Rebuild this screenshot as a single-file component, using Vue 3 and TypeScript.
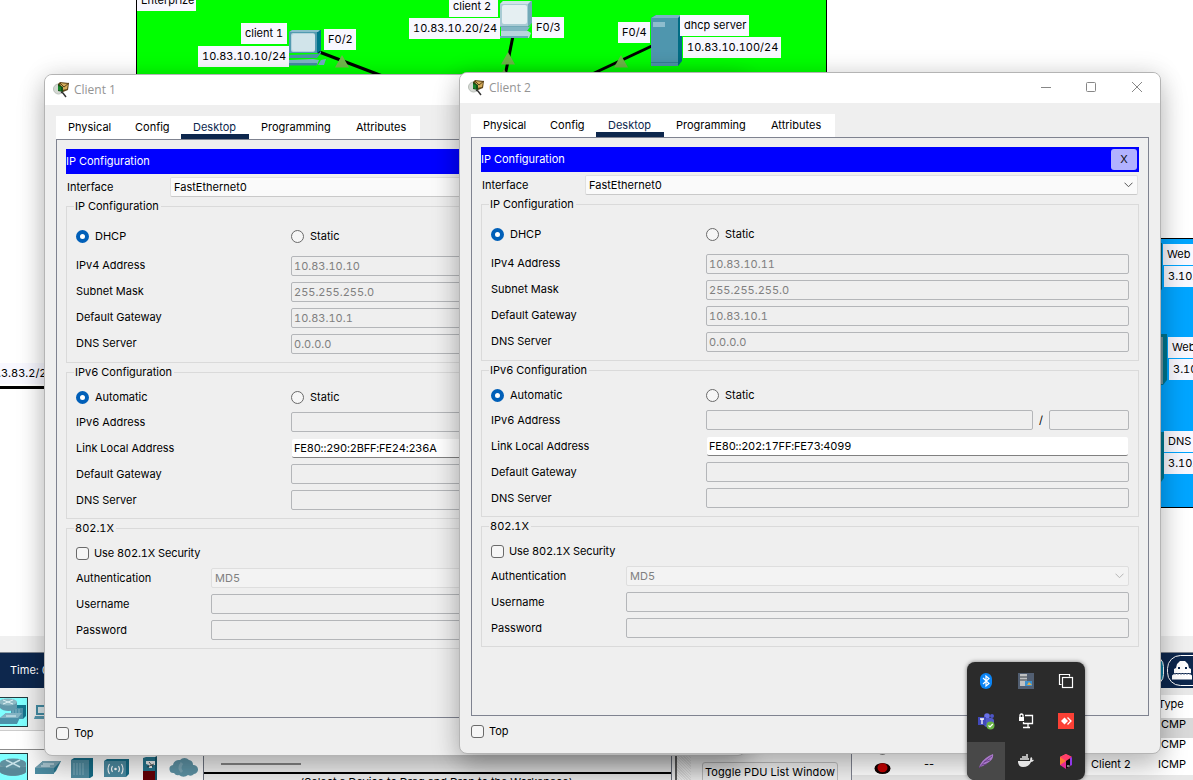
<script setup lang="ts">
interface FieldRow {
  label: string
  value?: string
  kind?: 'plain' | 'split' | 'editable' | 'select'
}

interface Group {
  id: string
  title: string
  radio?: string
  check?: string
  rows: FieldRow[]
}

interface ClientWindow {
  id: string
  title: string
  groups: Group[]
}

const tabs = ['Physical', 'Config', 'Desktop', 'Programming', 'Attributes']

function clientWindow(id: string, title: string, address: string, linkLocal: string): ClientWindow {
  return {
    id,
    title,
    groups: [
      {
        id: 'ipv4',
        title: 'IP Configuration',
        radio: 'DHCP',
        rows: [
          { label: 'IPv4 Address', value: address },
          { label: 'Subnet Mask', value: '255.255.255.0' },
          { label: 'Default Gateway', value: '10.83.10.1' },
          { label: 'DNS Server', value: '0.0.0.0' },
        ],
      },
      {
        id: 'ipv6',
        title: 'IPv6 Configuration',
        radio: 'Automatic',
        rows: [
          { label: 'IPv6 Address', kind: 'split' },
          { label: 'Link Local Address', value: linkLocal, kind: 'editable' },
          { label: 'Default Gateway' },
          { label: 'DNS Server' },
        ],
      },
      {
        id: 'dot1x',
        title: '802.1X',
        check: 'Use 802.1X Security',
        rows: [
          { label: 'Authentication', value: 'MD5', kind: 'select' },
          { label: 'Username' },
          { label: 'Password' },
        ],
      },
    ],
  }
}

const windows: ClientWindow[] = [
  clientWindow('one', 'Client 1', '10.83.10.10', 'FE80::290:2BFF:FE24:236A'),
  clientWindow('two', 'Client 2', '10.83.10.11', 'FE80::202:17FF:FE73:4099'),
]

interface Tag {
  text: string
  x: number
  y: number
  w: number
}

const tags: Tag[] = [
  { text: 'Enterprize', x: 137, y: -10, w: 59 },
  { text: 'client 1', x: 241, y: 23, w: 46 },
  { text: '10.83.10.10/24', x: 198, y: 46, w: 91 },
  { text: 'F0/2', x: 324, y: 29, w: 32 },
  { text: 'client 2', x: 449, y: -4, w: 49 },
  { text: '10.83.10.20/24', x: 409, y: 18, w: 91 },
  { text: 'F0/3', x: 532, y: 17, w: 32 },
  { text: 'F0/4', x: 618, y: 22, w: 32 },
  { text: 'dhcp server', x: 680, y: 15, w: 69 },
  { text: '10.83.10.100/24', x: 683, y: 37, w: 98 },
  { text: '.3.83.2/24', x: -6, y: 363, w: 62 },
  { text: 'Web', x: 1163, y: 244, w: 60 },
  { text: '3.10.', x: 1164, y: 266, w: 60 },
  { text: 'Web', x: 1168, y: 337, w: 60 },
  { text: '3.10.', x: 1169, y: 359, w: 60 },
  { text: 'DNS', x: 1164, y: 431, w: 60 },
  { text: '3.10.', x: 1164, y: 453, w: 60 },
]
</script>

<template>
  <div class="desktop">
    <svg class="canvas" width="1193" height="640" viewBox="0 0 1193 640">
      <rect x="136.5" y="-5" width="690" height="300" fill="#00ff00" stroke="#000" />
      <g stroke="#000" stroke-width="3">
        <path d="M318 51.500L385 77" />
        <path d="M513 36L505 76" />
        <path d="M654 45L590 75" />
      </g>
      <g fill="#70b84c">
        <path d="M342 55l7 12.500h-14z" />
        <path d="M508 52l7 12.500h-14z" />
        <path d="M621 55l7 12.500h-14z" />
        <path d="M504 69l7 12.500h-14z" />
      </g>
      <g>
        <path d="M289 32l3-2h29v20l-3 3h-29z" fill="#00738c" />
        <path d="M289 32l3-2h28l-2 2z" fill="#8bbccb" />
        <rect x="289" y="32" width="28" height="21" fill="#529bb0" />
        <rect x="291" y="33" width="24" height="19" rx="2" fill="#b3d2dc" />
        <rect x="292" y="34" width="23" height="17" rx="2" fill="#d1e4ea" />
        <path d="M290 55l28-1 3-3v2l-4 5h-28z" fill="#4c93aa" />
        <path d="M289 60l24-1 6 1-2 5h-28z" fill="#7fb3c6" />
        <path d="M289 63h28v2.500h-28z" fill="#438ba3" />
        <path d="M321 60l5-1-2 6h-6z" fill="#72acc1" />
      </g>
      <g>
        <path d="M500 4l3-3h29v22l-4 4h-28z" fill="#72a9b7" />
        <path d="M500 4l3-3h28l-3 3z" fill="#cfe3e8" />
        <rect x="500" y="4" width="28" height="22" fill="#a8cbd4" />
        <rect x="502" y="5" width="25" height="19" rx="2" fill="#e5eff2" />
        <path d="M501 27h28l3-3-5 7h-26z" fill="#83b5c3" />
        <path d="M501 31h27l3 2-2 5h-28z" fill="#b7d5dd" />
        <path d="M500 36h28v2h-28z" fill="#6ba8ba" />
      </g>
      <g>
        <path d="M651 18l5-3h26v46l-4 5h-27z" fill="#006c84" />
        <path d="M651 18l5-3h25l-3 3z" fill="#7ab4c5" />
        <rect x="651" y="18" width="27" height="48" fill="#4f96ae" />
        <rect x="653" y="22" width="12" height="5" fill="#8ebdce" />
        <path d="M651 62.500h27" stroke="#397f96" />
      </g>
      <rect x="0" y="386" width="60" height="3" fill="#000" />
      <rect x="1150" y="238.500" width="60" height="269" fill="#00a5ff" stroke="#000" />
      <path d="M1155 243h7v46l-3 4h-4z" fill="#00667c" />
      <path d="M1155 334h12v46l-4 5h-8z" fill="#00758d" />
      <path d="M1155 337h8v47h-8z" fill="#7295a1" />
      <path d="M1155 432h9v46l-3 4h-6z" fill="#00758d" />
    </svg>
    <span
      v-for="(tag, i) in tags"
      :key="i"
      class="tag"
      :style="{ left: tag.x + 'px', top: tag.y + 'px', width: tag.w + 'px' }"
    >{{ tag.text }}</span>

    <footer class="dock">
      <div class="clock-bar">
        <span>Time: 00:12:34</span>
        <svg width="36" height="35" viewBox="1157 653 36 35">
          <rect x="1130" y="655.500" width="33.500" height="30" rx="11" fill="#08799e" stroke="#fff" />
          <rect x="1167.500" y="655.500" width="50" height="30" rx="13" fill="#0d274d" stroke="#fff" />
          <path d="M1174 673v-4l2-1 1-4 3-3h5l3 3 1 4 2 1v4z" fill="#fff" />
          <path d="M1172 675.500l2-1.500h16l2 1.500v4h-20z" fill="#fff" />
          <path d="M1178 667h2v2h-2zM1185 667h2v2h-2z" fill="#0d274d" />
          <path d="M1174 674h17" stroke="#72809a" stroke-dasharray="2 1" />
        </svg>
      </div>
      <div class="dock-body">
        <section class="devices">
          <div class="category-row">
            <svg width="60" height="38" viewBox="0 692 60 38">
              <rect x="-1" y="697.500" width="28.500" height="29" fill="#7fffff" stroke="#243c40" />
              <path d="M11 708l4-3h11v11l-3 3H11z" fill="#14758d" />
              <path d="M11 708h12v11H11z" fill="#4c91a9" />
              <path d="M13 709v9m3-9v9m3-9v9" stroke="#81b3c3" />
              <path d="M0 702v6c3 4 14 4 17 0v-6z" fill="#6398aa" />
              <ellipse cx="8" cy="702" rx="9" ry="3.500" fill="#8eb8c3" />
              <path d="M3 700l10 4m-10 0l10-4" stroke="#e0f2f5" />
              <path d="M0 718l6-5h16l-5 11H0z" fill="#4c91a9" />
              <path d="M0 718l6-5h16l-4 5z" fill="#82b3c3" />
              <path d="M6 716h10" stroke="#e1f5f8" />
              <path d="M36 705h14v10H36z" fill="#438ca4" />
              <path d="M38 707h12v6H38z" fill="#dbe8ec" />
              <path d="M35 716h16v3H34z" fill="#5799af" />
            </svg>
          </div>
          <div class="search-row"></div>
          <div class="device-row">
            <svg width="203" height="30" viewBox="0 750 203 30">
              <rect x="-1" y="753.500" width="28.500" height="30" fill="#7fffff" stroke="#243c40" />
              <path d="M0 763v9c4 5 22 5 26 0v-9z" fill="#7396a2" />
              <path d="M0 767v5c4 5 22 5 26 0v-5z" fill="#588897" />
              <ellipse cx="13" cy="763.500" rx="13" ry="5" fill="#60909f" />
              <path d="M6 760l14 7m-14 0l14-7" stroke="#c6e0e6" stroke-width="1.500" />
              <path d="M35 768l8-7h18l-5 10-3 3H35z" fill="#27748c" />
              <path d="M35 768l8-7h18l-7 7z" fill="#75a0b0" />
              <path d="M35 768h19v6H35z" fill="#4c8ca2" />
              <path d="M43 764h11m-13 2h9" stroke="#dceaf0" />
              <path d="M71 760l3-2h19v18l-3 2H71z" fill="#166d87" />
              <path d="M71 760h18v18H71z" fill="#508ca1" />
              <path d="M74 763v12m3-12v12m3-12v12m3-12v12" stroke="#97bdca" stroke-width=".7" />
              <path d="M104 761l3-2h22v15l-3 3h-22z" fill="#166d87" />
              <path d="M104 761h22v16h-22z" fill="#4d8ca2" />
              <circle cx="115.500" cy="769" r="1.300" fill="#fff" />
              <path d="M112.500 766q-2 3 0 6m6-6q2 3 0 6m-9-8q-3 5 0 10m12-10q3 5 0 10" fill="none" stroke="#fff" stroke-width="1.100" />
              <path d="M143 758l3-1h11v14h-14z" fill="#27768e" />
              <path d="M143 771h14v9h-14z" fill="#650007" />
              <path d="M155 757l2-1v24h-2z" fill="#16566b" />
              <path d="M146 761h9v4h-3v3h-3v-3l-3-1z" fill="#eee" />
              <path d="M147 767l7-3m-5-2l4 5" stroke="#333" stroke-width=".8" />
              <path d="M174 773a4 4 0 0 1-1-8 6 6 0 0 1 7-5 6 6 0 0 1 9 0 5 5 0 0 1 4 5 4.500 4.500 0 0 1 1 9 5 5 0 0 1-6 1 7 7 0 0 1-9 0q-3 1-5-2z" fill="#5e93a5" />
              <path d="M182 763q-4 5 0 9" fill="none" stroke="#7ba6b5" stroke-width="3" />
            </svg>
          </div>
        </section>
        <section class="hint">
          <div class="track"><i></i></div>
          <p>(Select a Device to Drag and Drop to the Workspace)</p>
        </section>
        <div class="grip"></div>
        <section class="toggle"><button>Toggle PDU List Window</button></section>
        <section class="events">
          <div class="event head"><span class="type">Type</span></div>
          <div class="event picked"><span class="type">ICMP</span></div>
          <div class="event"><span class="type">ICMP</span></div>
          <div class="event last">
            <svg width="17" height="28" viewBox="0 0 17 28">
              <ellipse cx="8.500" cy="-1" rx="6" ry="4.500" fill="#111" />
              <ellipse cx="8.500" cy="17.500" rx="8" ry="5.500" fill="#110000" />
              <ellipse cx="8.500" cy="16.800" rx="5" ry="4.500" fill="#c60000" />
            </svg>
            <span class="dashes">--</span><span class="source">Client 2</span><span class="type">ICMP</span>
          </div>
        </section>
      </div>
    </footer>

    <article v-for="win in windows" :key="win.id" class="window" :class="win.id">
      <header class="titlebar">
        <svg class="app-icon" width="17" height="17" viewBox="0 0 17 17">
          <ellipse cx="5.500" cy="8" rx="5" ry="5" fill="#d5d9d4" stroke="#b9beb8" />
          <path d="M5 3l2-2 9 1-1 7-5 2-5-3z" fill="#604719" />
          <path d="M7 2l8 1-1 5-5 1z" fill="#d6ad5b" />
          <path d="M7 2l4 4 5-4" fill="none" stroke="#5b4219" />
          <path d="M5 3l5 3v5l-5-1z" fill="#174f17" />
          <path d="M5 5l3 1v4l-3-1z" fill="#16852a" />
          <path d="M8 11l2 1 3 4" stroke="#333" stroke-width="1.500" fill="none" />
        </svg>
        <span class="caption">{{ win.title }}</span>
        <svg class="controls" width="110" height="16" viewBox="0 0 110 16" fill="none" stroke="#878787">
          <path d="M4 8.500h10" />
          <rect x="49.500" y="3.500" width="9" height="9" rx="1" />
          <path d="M95 3l10 10m0-10L95 13" />
        </svg>
      </header>

      <nav class="tabs">
        <span v-for="tab in tabs" :key="tab" class="tab" :class="{ active: tab === 'Desktop' }">{{ tab }}</span>
      </nav>

      <main class="pane">
        <div class="banner"><span>IP Configuration</span><button>X</button></div>
        <div class="interface">
          <span>Interface</span>
          <div class="box combo">
            FastEthernet0
            <svg width="9" height="6" viewBox="0 0 9 6"><path d="M.5.7l4 4 4-4" fill="none" stroke="#555" /></svg>
          </div>
        </div>

        <section v-for="group in win.groups" :key="group.id" class="group" :class="group.id">
          <h3>{{ group.title }}</h3>
          <div class="options">
            <template v-if="group.radio">
              <span class="option"><i class="radio on"></i>{{ group.radio }}</span>
              <span class="option"><i class="radio"></i>Static</span>
            </template>
            <span v-else class="option check-option"><i class="check"></i>{{ group.check }}</span>
          </div>
          <div v-for="row in group.rows" :key="row.label" class="row">
            <span class="name">{{ row.label }}</span>
            <template v-if="row.kind === 'split'">
              <div class="box"></div>
              <span class="slash">/</span>
              <div class="box prefix"></div>
            </template>
            <div v-else-if="row.kind === 'select'" class="box combo disabled">
              {{ row.value }}
              <svg width="9" height="6" viewBox="0 0 9 6"><path d="M.5.7l4 4 4-4" fill="none" stroke="#b5b5b5" /></svg>
            </div>
            <div v-else class="box" :class="row.kind">{{ row.value }}</div>
          </div>
        </section>
      </main>
      <footer class="top-option"><i class="check"></i>Top</footer>
    </article>

    <aside class="tray">
      <div class="cell">
        <svg viewBox="0 0 18 18">
          <rect x="3" y="1" width="12" height="16" rx="6" fill="#0a84f5" />
          <path d="M6 6l6 5.500-3 2.500V4l3 2.500L6 12" fill="none" stroke="#fff" stroke-width="1.200" />
        </svg>
      </div>
      <div class="cell">
        <svg viewBox="0 0 18 18">
          <rect x="1" y="1" width="16" height="16" fill="#525f72" />
          <rect x="3" y="2" width="7" height="12" fill="#bfc1c2" />
          <path d="M3 5h7M3 8h7" stroke="#3d4248" />
          <rect x="8" y="9" width="7" height="5" fill="#3b91cf" />
          <path d="M10 13l2-3 3 3z" fill="#e4ad4b" />
        </svg>
      </div>
      <div class="cell">
        <svg viewBox="0 0 18 18" fill="none" stroke="#fff" stroke-width="1.200">
          <path d="M4.500 12.500h-2v-10h10v2" />
          <rect x="5.500" y="5.500" width="10" height="10" />
        </svg>
      </div>
      <div class="cell">
        <svg viewBox="0 0 18 18">
          <circle cx="10" cy="4" r="2.800" fill="#6870e8" />
          <circle cx="15" cy="4" r="2" fill="#4d55c8" />
          <rect x="7" y="6" width="10" height="9" rx="3" fill="#5059c9" />
          <rect x="1" y="5" width="8" height="8" fill="#4149ba" />
          <path d="M3 7h4M5 7v5" stroke="#fff" stroke-width="1.300" />
          <circle cx="13.500" cy="13.500" r="4" fill="#69b344" />
          <path d="M11.500 13.500l1.500 1.500 2.800-3" fill="none" stroke="#fff" stroke-width="1.200" />
        </svg>
      </div>
      <div class="cell">
        <svg viewBox="0 0 18 18" fill="none" stroke="#fff" stroke-width="1.300">
          <path d="M8 3.500h7.500v8h-9V10" />
          <path d="M11 12v3M6 15.500h7" />
          <rect x="2" y="5" width="5" height="4" fill="#fff" stroke="none" />
          <path d="M3 5V3q1.500-2 3 0v2" />
        </svg>
      </div>
      <div class="cell">
        <svg viewBox="0 0 18 18">
          <rect x="1" y="1" width="16" height="16" fill="#fb4035" />
          <path d="M7.500 5.500L11 9l-3.500 3.500L4 9z" fill="#fff" />
          <path d="M10.500 5.500L14 9l-3.500 3.500" fill="none" stroke="#fff" stroke-width="1.300" />
        </svg>
      </div>
      <div class="cell lit">
        <svg viewBox="0 0 18 18">
          <path d="M2 16Q4 7 16 2q1 5-4 8l-6 4q-2 0-4 2z" fill="#a979c9" />
          <path d="M2 16Q7 9 15 4M5 13l5-1m-3-2l6-2" fill="none" stroke="#633681" stroke-width=".8" />
        </svg>
      </div>
      <div class="cell">
        <svg viewBox="0 0 18 18">
          <path d="M1 9h12q0-3 1-4 2 1 1 3 1-.5 2 0-1 2-3 2-2 5-8 5-5 0-5-6z" fill="#e5e5e5" />
          <path d="M3 7h9M5 5h6M9 3h2" stroke="#e5e5e5" stroke-width="1.500" />
        </svg>
      </div>
      <div class="cell">
        <svg viewBox="0 0 18 18">
          <path d="M9 2l6 3v8l-6 4-6-4V5z" fill="#e52b94" />
          <path d="M3 5l6-3v7l-6 4z" fill="#fc7b32" />
          <path d="M9 2l6 3-6 4-6-4z" fill="#ff3f69" />
          <path d="M9 9l6-4v8l-6 4z" fill="#080808" />
          <path d="M15 5v8l-2 1V6z" fill="#9039e8" />
          <path d="M10 14h2.500" stroke="#fff" />
        </svg>
      </div>
    </aside>
  </div>
</template>

<style>
html,
body {
  overflow: hidden;
}
</style>

<style scoped>
.desktop {
  position: relative;
  width: 1193px;
  height: 780px;
  overflow: hidden;
  background: #fff;
  color: #000;
  font: 11px/14px Inter, "Liberation Sans", sans-serif;
  font-variant-numeric: tabular-nums;
}
.desktop *,
.desktop {
  box-sizing: border-box;
}
svg {
  display: block;
  flex: none;
}
button {
  font: inherit;
  color: inherit;
  padding: 0;
}
.canvas {
  position: absolute;
  inset: 0 auto auto 0;
}
.tag {
  position: absolute;
  height: 21px;
  padding-left: 4px;
  background: #f8f8ff;
  line-height: 20px;
  white-space: nowrap;
}

/* Lower toolbars */
.dock {
  position: absolute;
  inset: 636px 0 0 0;
  display: flex;
  flex-direction: column;
  padding-top: 16px;
  background: #f0f0f0;
}
.clock-bar {
  flex: none;
  display: flex;
  justify-content: space-between;
  align-items: center;
  height: 36px;
  padding-left: 10px;
  border-top: 1px solid #7e8590;
  background: #0d274d;
  color: #fff;
}
.clock-bar span {
  padding-bottom: 2px;
}
.dock-body {
  flex: 1;
  display: flex;
  min-height: 0;
}
.devices {
  width: 203px;
  padding-top: 4px;
}
.category-row {
  height: 38px;
}
.search-row {
  height: 20px;
  border-top: 1px solid #ccc;
  border-bottom: 1px solid #8b8b8b;
  background: #fff;
}
.device-row {
  height: 30px;
  background: #fafafa;
}
.hint {
  width: 469px;
  margin-top: 62px;
  border: 1px solid #6e7480;
  border-width: 0 1px;
  background: #efefef;
}
.track {
  height: 24px;
  padding: 13px 0 0 17px;
  border-bottom: 2px solid #000;
}
.track i {
  display: block;
  width: 80px;
  height: 2px;
  background: #858585;
}
.hint p {
  margin: 1px 0 0;
  padding-right: 2px;
  text-align: center;
  white-space: nowrap;
  letter-spacing: -0.03px;
}
.grip {
  width: 22px;
  margin-left: 3px;
  border-left: 2px solid #606060;
  background: repeating-linear-gradient(45deg, #f0f0f0 0 1px, #e0e0e0 1px 2px) no-repeat 0 0 / 14px 100%;
}
.toggle {
  width: 154px;
  padding: 74px 0 0 5px;
}
.toggle button {
  display: block;
  width: 136px;
  height: 22px;
  padding-bottom: 2px;
  border: 1px solid #bdbdbd;
  border-radius: 3px;
  background: #efefef;
  white-space: nowrap;
  letter-spacing: 0.1px;
}
.events {
  flex: 1;
  padding-top: 7px;
  border-left: 1px solid #7f8390;
  background: #e8e8e8;
}
.event {
  display: flex;
  align-items: center;
  height: 20px;
  padding-bottom: 8px;
  background: #fff;
}
.event.head {
  height: 23px;
  padding-bottom: 5px;
}
.event.picked {
  background: #d9d9d9;
}
.event.last {
  height: 17px;
  padding-bottom: 5px;
}
.event svg {
  margin: 1px 0 0 22px;
}
.event .type {
  width: 35px;
  margin-left: auto;
}
.dashes {
  margin-left: 33px;
  font-variant-numeric: normal;
}
.source {
  margin-left: auto;
  margin-right: 27px;
}
.source + .type {
  margin-left: 0;
}

/* Windows */
.window {
  position: absolute;
  display: flex;
  flex-direction: column;
  width: 702px;
  height: 682px;
  padding: 0 11px;
  border: 1px solid #b4b4b4;
  border-radius: 8px;
  background: #efefef;
  box-shadow: 0 14px 28px rgba(0, 0, 0, 0.22), 0 0 24px rgba(0, 0, 0, 0.12);
}
.window.one {
  left: 44px;
  top: 74px;
}
.window.two {
  left: 459px;
  top: 72px;
}
.titlebar {
  flex: none;
  display: flex;
  align-items: center;
  height: 30px;
  margin: 0 -11px;
  padding: 0 13px 0 8px;
  border-radius: 7px 7px 0 0;
  background: #fff;
  color: #949494;
}
.caption {
  margin-left: 4px;
  font: 12px/16px "Open Sans", sans-serif;
}
.app-icon {
  margin-bottom: 2px;
}
.controls {
  margin: 0 0 2px auto;
}
.tabs {
  flex: none;
  display: flex;
  width: 364px;
  height: 23px;
  margin-top: 11px;
  background: #fff;
}
.tab {
  width: 67px;
  padding-left: 12px;
  line-height: 22px;
}
.tab:nth-child(2) {
  width: 58px;
}
.tab:nth-child(3) {
  width: 68px;
}
.tab:nth-child(4) {
  width: 95px;
}
.tab:nth-child(5) {
  width: 76px;
}
.tab.active {
  color: #0d274d;
  border-bottom: 5px solid #0d274d;
}
.pane {
  flex: none;
  height: 579px;
  width: 678px;
  padding: 9px;
  border: 1px solid #7f8390;
}
.banner {
  display: flex;
  align-items: center;
  justify-content: space-between;
  height: 25px;
  padding-right: 2px;
  background: #00f;
  color: #fff;
}
.banner span {
  padding-bottom: 2px;
}
.banner button {
  width: 26px;
  height: 21px;
  padding-bottom: 2px;
  border: 0;
  border-radius: 3px;
  background: #b2b2ff;
  color: #111;
}
.interface {
  display: flex;
  align-items: center;
  height: 26px;
  padding: 0 1px;
}
.interface > span {
  width: 103px;
}
.box {
  flex: 1;
  display: flex;
  align-items: center;
  height: 20px;
  padding-left: 2px;
  border: 1px solid #b4b6b9;
  border-radius: 2px;
  color: #808080;
  white-space: nowrap;
}
.combo {
  justify-content: space-between;
  padding: 0 4px 0 3px;
  border-color: #e0e0e0;
  border-bottom-color: #c9c9c9;
  background: #fafafa;
  color: #000;
}
.combo.disabled {
  border-color: #dedede;
  background: #f3f3f3;
  color: #808080;
}
.box.editable {
  height: 19px;
  margin: 0 1px;
  padding-left: 2px;
  border: 0;
  border-bottom: 1px solid #808080;
  background: #fff;
  color: #000;
  letter-spacing: -0.19px;
}
.box.prefix {
  flex: none;
  width: 80px;
}
.slash {
  width: 16px;
  text-align: center;
}
.group {
  height: 157px;
  margin-top: 6px;
  padding: 0 9px;
  border: 1px solid #dadada;
}
.group.ipv6,
.group.dot1x {
  margin-top: 9px;
}
.group.ipv6 {
  height: 147px;
}
.group.dot1x {
  height: 121px;
}
.group h3 {
  width: fit-content;
  height: 14px;
  margin: -8px 0 0 -2px;
  padding: 0 2px 0 1px;
  background: #efefef;
  font-size: inherit;
  font-weight: inherit;
}
.options {
  display: flex;
  height: 25px;
  margin: 11px 0 4px;
}
.ipv6 .options,
.dot1x .options {
  margin: 6px 0 -1px;
}
.option {
  display: flex;
  align-items: center;
  gap: 6px;
  width: 215px;
  padding-bottom: 2px;
}
.check-option {
  gap: 5px;
  letter-spacing: -0.12px;
}
.radio,
.check {
  width: 13px;
  height: 13px;
  margin-top: 2px;
  border: 1px solid #6a6a6a;
  border-radius: 50%;
  background: #f6f6f6;
}
.radio.on {
  border: 4px solid #005fb8;
  background: #fff;
}
.check {
  border-radius: 3px;
}
.row {
  display: flex;
  align-items: center;
  height: 26px;
}
.name {
  width: 215px;
}
.ipv4 .name {
  padding-bottom: 2px;
}
.dot1x .name {
  width: 135px;
}
.top-option {
  display: flex;
  align-items: center;
  gap: 5px;
  height: 31px;
  padding-bottom: 2px;
}

/* Notification tray */
.tray {
  position: absolute;
  left: 967px;
  top: 662px;
  display: grid;
  grid-template: repeat(3, 40px) / 38px 42px 38px;
  width: 118px;
  height: 118px;
  border-radius: 8px;
  overflow: hidden;
  background: #2b2b2b;
  box-shadow: 0 0 4px rgba(0, 0, 0, 0.5);
}
.cell {
  display: grid;
  place-items: center;
  padding-bottom: 2px;
}
.cell svg {
  width: 18px;
  height: 18px;
}
.cell.lit {
  background: #484848;
}
</style>
